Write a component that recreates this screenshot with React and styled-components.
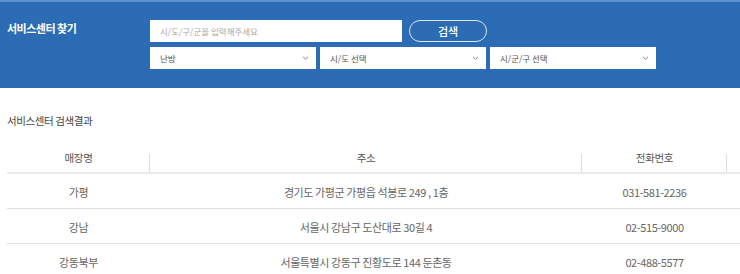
import React from "react";
import styled, { createGlobalStyle } from "styled-components";

const stores = [
  { name: "가평", address: "경기도 가평군 가평읍 석봉로 249 , 1층", tel: "031-581-2236" },
  { name: "강남", address: "서울시 강남구 도산대로 30길 4", tel: "02-515-9000" },
  { name: "강동북부", address: "서울특별시 강동구 진황도로 144 둔촌동", tel: "02-488-5577" },
];

const Chevron = () => (
  <svg width="7" height="4" viewBox="0 0 7 4">
    <path d="M1 0.8l2.5 2.4 2.5-2.4" fill="none" stroke="#777" strokeWidth="0.9" />
  </svg>
);

const App = () => {
  return (
    <Page>
      <GlobalStyle />
      <SearchBand>
        <BandTitle>서비스센터 찾기</BandTitle>
        <Form>
          <FormRow>
            <KeywordInput placeholder="시/도/구/군을 입력해주세요" />
            <SearchButton>검색</SearchButton>
          </FormRow>
          <FormRow $gap="4px">
            <Select>
              <span>난방</span>
              <Chevron />
            </Select>
            <Select>
              <span>시/도 선택</span>
              <Chevron />
            </Select>
            <Select>
              <span>시/군/구 선택</span>
              <Chevron />
            </Select>
          </FormRow>
        </Form>
      </SearchBand>

      <Result>
        <ResultTitle>서비스센터 검색결과</ResultTitle>
        <Table>
          <HeadRow>
            <HeadCell $divider>매장명</HeadCell>
            <HeadCell $divider>주소</HeadCell>
            <HeadCell $divider>전화번호</HeadCell>
            <HeadCell />
          </HeadRow>
          {stores.map((s) => (
            <Row key={s.name}>
              <Cell>{s.name}</Cell>
              <Cell>{s.address}</Cell>
              <Cell>{s.tel}</Cell>
              <Cell />
            </Row>
          ))}
        </Table>
      </Result>
    </Page>
  );
};

export default App;

const GlobalStyle = createGlobalStyle`
  body {
    margin: 0;
    background: #fff;
    overflow: hidden;
    font-family: "Noto Sans CJK KR", "Noto Sans", sans-serif;
  }
`;

const Page = styled.div`
  width: 100%;
  overflow: hidden;
`;

const SearchBand = styled.div`
  display: flex;
  height: 88px;
  box-sizing: border-box;
  padding: 18px 0 0 7px;
  background: #2b6cb4;
  border-top: 2px solid #5f94cf;
`;

const BandTitle = styled.div`
  width: 143px;
  padding-top: 1px;
  font-size: 11px;
  line-height: 14px;
  font-weight: 700;
  letter-spacing: -0.5px;
  color: #fff;
`;

const Form = styled.div`
  display: flex;
  flex-direction: column;
  gap: 5px;
`;

const FormRow = styled.div`
  display: flex;
  gap: ${(p) => p.$gap || "7px"};
`;

const KeywordInput = styled.input`
  width: 252px;
  height: 22px;
  box-sizing: border-box;
  border: none;
  outline: none;
  padding: 0 10px;
  font-family: inherit;
  font-size: 8.5px;
  color: #333;
  background: #fff;
  &::placeholder {
    color: #a9a9a9;
  }
`;

const SearchButton = styled.button`
  width: 78px;
  height: 22px;
  box-sizing: border-box;
  border: 1px solid #d8e6f5;
  border-radius: 11px;
  background: transparent;
  color: #fff;
  font-family: inherit;
  font-size: 11px;
  font-weight: 500;
  padding: 0;
  line-height: 20px;
`;

const Select = styled.div`
  display: flex;
  align-items: center;
  justify-content: space-between;
  width: 166px;
  height: 22px;
  box-sizing: border-box;
  padding: 0 7px 0 10px;
  background: #fff;
  font-size: 8.5px;
  color: #555;
`;

const Result = styled.div`
  padding: 25px 0 0 7px;
`;

const ResultTitle = styled.div`
  font-size: 10.5px;
  line-height: 16px;
  letter-spacing: -0.4px;
  color: #444;
  margin-bottom: 17px;
`;

const Table = styled.div`
  display: flex;
  flex-direction: column;
`;

const columns = "143px 432px 145px 1fr";

const HeadRow = styled.div`
  display: grid;
  grid-template-columns: ${columns};
  height: 26px;
  border-bottom: 2px solid #ececec;
`;

const HeadCell = styled.div`
  text-align: center;
  font-size: 10.5px;
  line-height: 24px;
  letter-spacing: -0.3px;
  color: #555;
  background: ${(p) =>
    p.$divider ? "linear-gradient(#dedede, #dedede) right bottom / 1px 18px no-repeat" : "none"};
`;

const Row = styled.div`
  display: grid;
  grid-template-columns: ${columns};
  height: 34px;
  border-bottom: 1px solid #e0e0e0;
  align-items: center;
`;

const Cell = styled.div`
  text-align: center;
  font-size: 11px;
  letter-spacing: -0.4px;
  color: #666;
  padding-top: 1px;
`;
